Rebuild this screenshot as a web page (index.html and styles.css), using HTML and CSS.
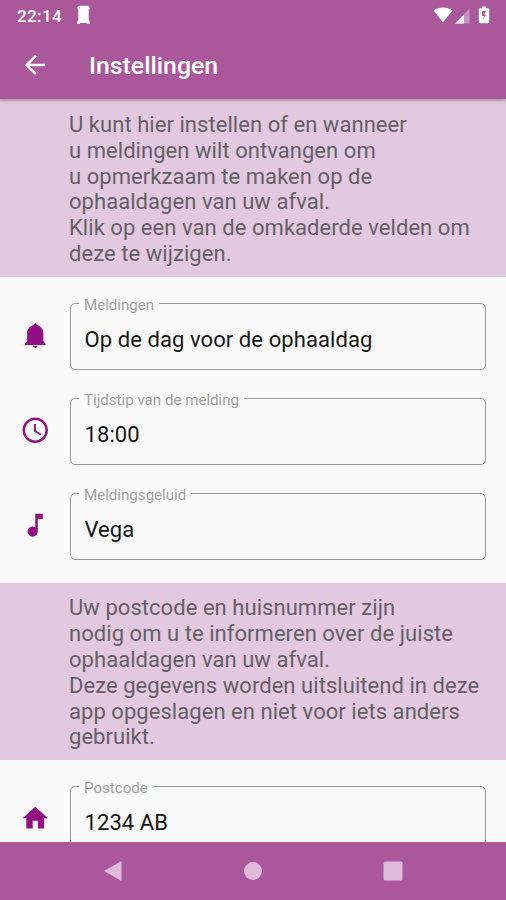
FILE: index.html
```html
<!doctype html>
<html lang="nl">

<head>
  <meta charset="utf-8">
  <meta name="viewport" content="width=device-width, initial-scale=1.0">
  <title>Instellingen</title>
  <link rel="stylesheet" href="styles.css">
</head>

<body>
  <div class="app">

    <header class="app-header">
      <div class="status-bar">
        <span class="clock">22:14</span>
        <svg class="icon-bin" width="15" height="20" viewBox="0 0 15 20">
          <path d="M3 .8h9l1.500 1.200v2l-.8.7v10.600l1.100 1V19h-2.600v-1H3.800v1H1.200v-2.700l1.100-1V4.700L1.500 4V2z"/>
        </svg>
        <span class="spacer"></span>
        <svg class="icon-wifi" width="20" height="16" viewBox="0 0 20 16">
          <path d="M.5 3.600C5.500-.4 14.500-.4 19.500 3.600L10 15.200z"/>
        </svg>
        <svg class="icon-signal" width="15" height="16" viewBox="0 0 15 16">
          <path class="faded" d="M14.500.8v14.700H.2z"/>
          <path d="M9 6.500v9H.2z"/>
        </svg>
        <svg class="icon-battery" width="12" height="18" viewBox="0 0 12 18">
          <path fill-rule="evenodd" d="M4 .5h4v1.700h2.200q1 0 1 1v13q0 1-1 1H1.800q-1 0-1-1v-13q0-1 1-1H4zM8.200 5H4.100v5h2.400L4.300 14.500 8.400 8.500H6z"/>
        </svg>
      </div>
      <div class="app-toolbar">
        <svg class="icon-back" width="30" height="30" viewBox="0 0 24 24">
          <path d="M20 11H7.830l5.590-5.590L12 4l-8 8 8 8 1.410-1.410L7.830 13H20v-2z"/>
        </svg>
        <h1 class="title">Instellingen</h1>
      </div>
    </header>

    <main class="content">
      <p class="info">U kunt hier instellen of en wanneer<br>
        u meldingen wilt ontvangen om<br>
        u opmerkzaam te maken op de<br>
        ophaaldagen van uw afval.<br>
        Klik op een van de omkaderde velden om<br>
        deze te wijzigen.</p>

      <section class="fields">
        <div class="row">
          <svg class="row-icon" viewBox="0 0 24 24">
            <path d="M12 2.300l1.300 1.600C16.600 4.900 18.400 7.300 18.400 10.500V16.800L20.200 18.600V19.600H3.800V18.600L5.600 16.800V10.500C5.600 7.300 7.400 4.900 10.700 3.900zM10.100 20.300h3.800q-.3 1.700-1.900 1.700t-1.900-1.700z"/>
          </svg>
          <fieldset class="field">
            <legend>Meldingen</legend>
            <div class="value">Op de dag voor de ophaaldag</div>
          </fieldset>
        </div>
        <div class="row">
          <svg class="row-icon" viewBox="0 0 24 24">
            <path d="M11.990 2C6.470 2 2 6.480 2 12s4.470 10 9.990 10C17.520 22 22 17.520 22 12S17.520 2 11.990 2zM12 20c-4.420 0-8-3.580-8-8s3.580-8 8-8 8 3.580 8 8-3.580 8-8 8zm.5-13H11v6l5.250 3.150.75-1.230-4.500-2.670z"/>
          </svg>
          <fieldset class="field">
            <legend>Tijdstip van de melding</legend>
            <div class="value">18:00</div>
          </fieldset>
        </div>
        <div class="row">
          <svg class="row-icon" viewBox="0 0 24 24">
            <path d="M12 3v10.550c-.59-.34-1.270-.55-2-.55-2.210 0-4 1.790-4 4s1.790 4 4 4 4-1.790 4-4V7h4V3h-6z"/>
          </svg>
          <fieldset class="field">
            <legend>Meldingsgeluid</legend>
            <div class="value">Vega</div>
          </fieldset>
        </div>
      </section>

      <p class="info">Uw postcode en huisnummer zijn<br>
        nodig om u te informeren over de juiste<br>
        ophaaldagen van uw afval.<br>
        Deze gegevens worden uitsluitend in deze<br>
        app opgeslagen en niet voor iets anders<br>
        gebruikt.</p>

      <section class="fields">
        <div class="row">
          <svg class="row-icon" viewBox="0 0 24 24">
            <path d="M10 20v-6h4v6h5v-8h3L12 3 2 12h3v8z"/>
          </svg>
          <fieldset class="field">
            <legend>Postcode</legend>
            <div class="value">1234 AB</div>
          </fieldset>
        </div>
      </section>
    </main>

    <nav class="nav-bar">
      <svg width="20" height="22" viewBox="0 0 20 22"><path d="M18.500 1v20L1 11z"/></svg>
      <svg width="20" height="22" viewBox="0 0 20 22"><circle cx="10" cy="11" r="9"/></svg>
      <svg width="20" height="22" viewBox="0 0 20 22"><rect x=".5" y="1.500" width="19" height="19" rx="1.500"/></svg>
    </nav>

  </div>
</body>

</html>
```

FILE: styles.css
```css
body {
  margin: 0;
  font-family: Roboto, 'Noto Sans', sans-serif;
  background-color: #fafafa;
}

svg {
  display: block;
  flex: none;
  fill: #fff;
}

.app {
  display: flex;
  flex-direction: column;
  height: 900px;
  overflow: hidden;
}

.app-header {
  position: relative;
  z-index: 1;
  flex: none;
  height: 99px;
  background-color: #aa579c;
  color: #fff;
  box-shadow: 0 1px 4px rgba(0, 0, 0, .4);
}

.status-bar {
  display: flex;
  align-items: center;
  height: 30px;
  padding: 0 16px 0 17px;
}

.clock {
  margin-top: 1px;
  font-size: 17px;
  font-weight: 500;
  letter-spacing: .4px;
}

.icon-bin {
  margin-left: 14px;
}

.spacer {
  flex: 1;
}

.icon-wifi {
  margin-right: -1px;
}

.icon-signal {
  margin: 1px 0 0 3px;
}

.icon-battery {
  margin-left: 8px;
}

.icon-signal .faded {
  opacity: .35;
}

.app-toolbar {
  display: flex;
  align-items: center;
  height: 69px;
  padding-left: 20px;
}

.title {
  margin: 2px 0 0 39px;
  font-size: 24.800px;
  font-weight: 500;
}

.content {
  flex: 1;
  min-height: 0;
  overflow: hidden;
}

.info {
  box-sizing: border-box;
  height: 178px;
  margin: 0;
  padding: 13px 0 0 69px;
  background-color: #e3c9e0;
  color: #636066;
  font-size: 22px;
  letter-spacing: .05px;
  line-height: 25.800px;
  white-space: nowrap;
}

.fields {
  display: flex;
  flex-direction: column;
  gap: 19px;
  padding: 17px 20px 23px 19.500px;
}

.fields + .info {
  height: 177px;
  padding-top: 12.400px;
}

.row {
  display: flex;
  height: 76px;
}

.row-icon {
  width: 30.500px;
  height: 30.500px;
  margin: 25.500px 20px 0 0;
  fill: #920f83;
}

.field {
  box-sizing: border-box;
  flex: 1;
  min-width: 0;
  height: 76px;
  margin: 0;
  padding: 0 8px;
  border: 1px solid #9a9a9a;
  border-radius: 5px;
}

.field legend {
  height: 18px;
  padding: 0 5px;
  color: #a0a0a0;
  font-size: 15.100px;
  line-height: 22px;
}

.value {
  padding: 13px 0 0 5.500px;
  color: #151515;
  font-size: 22px;
  letter-spacing: .08px;
  line-height: 29px;
}

.nav-bar {
  display: flex;
  flex: none;
  align-items: center;
  justify-content: center;
  gap: 120px;
  height: 58px;
  background-color: #aa579c;
}

.nav-bar svg {
  fill: #dfbadb;
}
```
